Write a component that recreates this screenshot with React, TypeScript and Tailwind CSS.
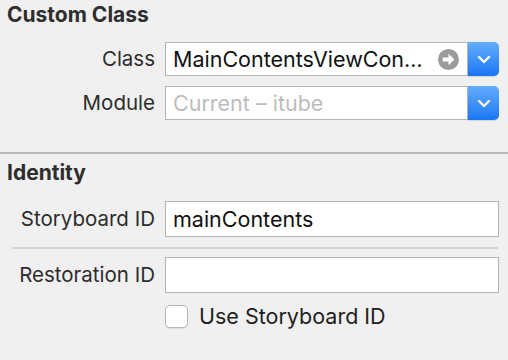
import * as React from "react";

const FONT = "font-['Inter','Liberation_Sans',Arial,sans-serif]";

function Chevron() {
  return (
    <svg width="14" height="9" viewBox="0 0 14 9" fill="none">
      <path
        d="M2 2l5 5 5-5"
        stroke="white"
        strokeWidth="2.4"
        strokeLinecap="round"
        strokeLinejoin="round"
      />
    </svg>
  );
}

function GoArrow() {
  return (
    <svg width="21" height="21" viewBox="0 0 20 20">
      <circle cx="10" cy="10" r="10" fill="#9b9b9b" />
      <path d="M4.5 8h5.5V4.6l5.6 5.4-5.6 5.4V12H4.5z" fill="white" />
    </svg>
  );
}

function PopUpRow({
  label,
  children,
  className = "",
}: {
  label: string;
  children: React.ReactNode;
  className?: string;
}) {
  return (
    <div className={`flex items-center ${className}`}>
      <div className="w-[155px] text-right text-[20.5px] leading-6 text-[#2c2c2c]">
        {label}
      </div>
      <div className="ml-[10px] flex h-[34px] w-[303px] items-center justify-between border border-[#b4b4b4] bg-white pl-[7px] pr-[8px]">
        {children}
      </div>
      <div className="flex h-[34px] w-[31px] items-center justify-center rounded-r-[5px] bg-gradient-to-b from-[#63adfe] to-[#1776f3] shadow-[0_1px_1px_rgba(0,0,0,0.12)]">
        <Chevron />
      </div>
    </div>
  );
}

function TextRow({
  label,
  value,
  className = "",
}: {
  label: string;
  value?: string;
  className?: string;
}) {
  return (
    <div className={`flex items-center ${className}`}>
      <div className="w-[155px] text-right text-[20.5px] leading-6 text-[#2c2c2c]">
        {label}
      </div>
      <div className="ml-[10px] flex h-[36px] w-[334px] items-center border border-[#b4b4b4] bg-white pl-[7px] text-[21.5px] text-[#111]">
        {value}
      </div>
    </div>
  );
}

export default function App() {
  return (
    <div className={`h-[360px] w-[508px] overflow-hidden bg-[#f0f0f0] ${FONT}`}>
      <h2 className="px-[7px] pt-[3px] text-[21px] font-bold leading-6 text-[#2e2e2e]">
        Custom Class
      </h2>

      <PopUpRow label="Class" className="mt-[15px]">
        <span className="text-[21.5px] text-[#111]">MainContentsViewCon…</span>
        <GoArrow />
      </PopUpRow>
      <PopUpRow label="Module" className="mt-[10px]">
        <span className="text-[21.5px] text-[#bdbdbd]">Current – itube</span>
      </PopUpRow>

      <div className="mt-[32px] h-[2px] bg-[#b8b8b8]" />

      <h2 className="mt-[7px] px-[7px] text-[21px] font-bold leading-6 text-[#2e2e2e]">
        Identity
      </h2>

      <TextRow label="Storyboard ID" value="mainContents" className="mt-[16px]" />
      <div className="ml-[12px] mt-[10px] h-[2px] w-[486px] bg-[#d4d4d4]" />
      <TextRow label="Restoration ID" className="mt-[8px]" />

      <label className="ml-[165px] mt-[11px] flex items-center gap-[11px]">
        <span className="h-[23px] w-[23px] rounded-[5px] border border-[#b7b7b7] bg-white shadow-[0_1px_1px_rgba(0,0,0,0.08)]" />
        <span className="text-[21.5px] leading-6 text-[#1e1e1e]">Use Storyboard ID</span>
      </label>
    </div>
  );
}
